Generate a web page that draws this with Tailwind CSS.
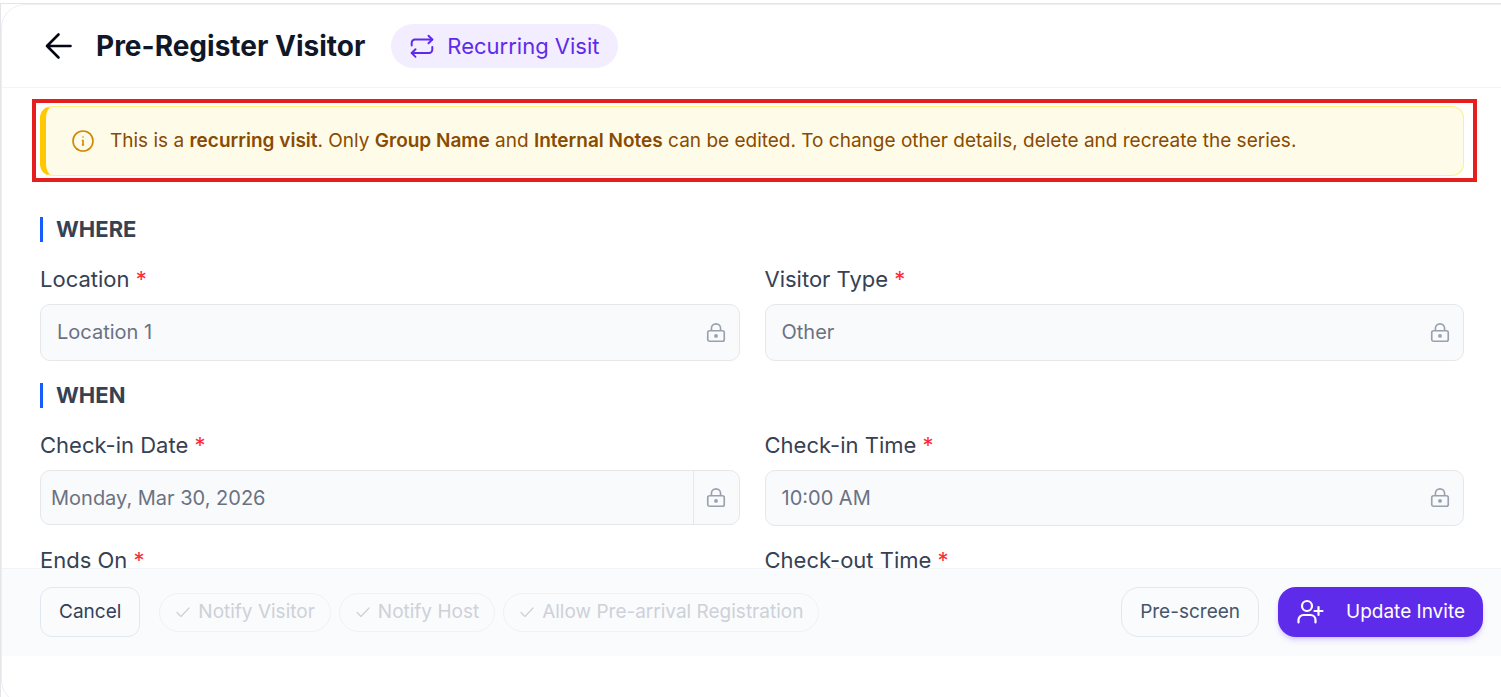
<!DOCTYPE html>
<html lang="en">
<head>
    <meta charset="UTF-8">
    <meta name="viewport" content="width=device-width, initial-scale=1.0">
    <title>Pre-Register Visitor</title>
    <script src="https://cdn.jsdelivr.net/npm/@tailwindcss/browser@4"></script>
</head>
<body class="h-screen overflow-hidden bg-white pt-[3px] font-['Inter',sans-serif] text-gray-700">
    <div class="h-full border-t border-l border-[#e4e4e9]">
        <div class="-mr-8 h-[calc(100%+7px)] rounded-3xl border border-gray-200/70 pr-[31px] flex flex-col">

            <!-- Header -->
            <header class="flex h-[83px] shrink-0 items-center border-b border-gray-100 pl-[38px]">
                <button type="button" aria-label="Back" class="mr-5 flex size-9 items-center justify-center text-gray-950">
                    <svg class="size-9" viewBox="0 0 36 36" fill="none" stroke="currentColor" stroke-width="2.6" stroke-linecap="round" stroke-linejoin="round"><path d="M18.500 6.500 7 18l11.500 11.500M7 18h23.500"/></svg>
                </button>
                <h1 class="text-[28px] leading-9 font-bold text-gray-900">Pre-Register Visitor</h1>
                <span class="ml-[26px] flex h-11 items-center gap-3 rounded-full bg-[#f2edff] px-[18px] text-[22px] leading-7 text-[#5f2bea]">
                    <svg class="size-[26px]" viewBox="0 0 24 24" fill="none" stroke="currentColor" stroke-width="1.8" stroke-linecap="round" stroke-linejoin="round"><path d="m18 2.500 3.500 3.500L18 9.500"/><path d="M2.500 11.500V9a3 3 0 0 1 3-3h16"/><path d="m6 22-3.500-3.500L6 15"/><path d="M21.500 13v2.500a3 3 0 0 1-3 3h-16"/></svg>
                    Recurring Visit
                </span>
            </header>

            <!-- Form -->
            <main class="min-h-0 flex-1 overflow-hidden pt-[18px] pr-[37px] pl-[38px]">
                <div class="relative">
                    <div class="flex h-[70px] items-center gap-[15px] rounded-xl border border-l-6 border-[#fff085] border-l-[#ffc800] bg-[#fefbe8] px-[25px]">
                        <svg class="size-6 shrink-0 text-[#d08700]" viewBox="0 0 24 24" fill="none" stroke="currentColor" stroke-width="1.6" stroke-linecap="round"><circle cx="12" cy="12" r="10"/><path d="M11.500 11.500h.5v4.500M11.500 16h1M12 8h.01"/></svg>
                        <p class="text-[19px] text-[#894b00]">This is a <strong class="font-semibold">recurring visit</strong>. Only <strong class="font-semibold">Group Name</strong> and <strong class="font-semibold">Internal Notes</strong> can be edited. To change other details, delete and recreate the series.</p>
                    </div>
                    <div class="pointer-events-none absolute -top-[7px] -right-[13px] -bottom-[6px] -left-[8px] border-4 border-[#e61e1e]"></div>
                </div>

                <h2 class="mt-[41px] border-l-3 border-[#155dfc] pl-[13px] text-[22px] leading-[25px] font-bold">WHERE</h2>
                <div class="mt-[23px] grid grid-cols-2 gap-x-[25px]">
                    <div>
                        <label for="location" class="block text-[22px] leading-7">Location <span class="text-[#fb2c36]">*</span></label>
                        <div class="mt-[11px] flex h-[57px] items-center rounded-[10px] border border-gray-200 bg-[#f9fafc] pr-3 pl-4">
                            <input id="location" type="text" value="Location 1" disabled class="min-w-0 flex-1 text-[20px] leading-[29px] text-[#6a7282]">
                            <svg class="size-[22px] text-[#99a1af]" viewBox="0 0 24 24" fill="none" stroke="currentColor" stroke-width="1.8" stroke-linejoin="round"><rect x="3" y="9.500" width="18" height="11.500" rx="2"/><path d="M7 9.500V7a5 5 0 0 1 10 0v2.500"/><circle cx="12" cy="15.200" r="1.200" fill="currentColor"/></svg>
                        </div>
                    </div>
                    <div>
                        <label for="visitor-type" class="block text-[22px] leading-7">Visitor Type <span class="text-[#fb2c36]">*</span></label>
                        <div class="mt-[11px] flex h-[57px] items-center rounded-[10px] border border-gray-200 bg-[#f9fafc] pr-3 pl-4">
                            <input id="visitor-type" type="text" value="Other" disabled class="min-w-0 flex-1 text-[20px] leading-[29px] text-[#6a7282]">
                            <svg class="size-[22px] text-[#99a1af]" viewBox="0 0 24 24" fill="none" stroke="currentColor" stroke-width="1.8" stroke-linejoin="round"><rect x="3" y="9.500" width="18" height="11.500" rx="2"/><path d="M7 9.500V7a5 5 0 0 1 10 0v2.500"/><circle cx="12" cy="15.200" r="1.200" fill="currentColor"/></svg>
                        </div>
                    </div>
                </div>

                <h2 class="mt-[22px] border-l-3 border-[#155dfc] pl-[13px] text-[22px] leading-[25px] font-bold">WHEN</h2>
                <div class="mt-[23px] grid grid-cols-2 gap-x-[25px] gap-y-5">
                    <div>
                        <label for="checkin-date" class="block text-[22px] leading-7">Check-in Date <span class="text-[#fb2c36]">*</span></label>
                        <div class="mt-[11px] flex h-[55px] items-center rounded-[10px] border border-gray-200 bg-[#f9fafc] pl-[10px]">
                            <input id="checkin-date" type="text" value="Monday, Mar 30, 2026" disabled class="min-w-0 flex-1 text-[20px] text-[#6a7282]">
                            <span class="flex h-full w-[46px] items-center justify-center border-l border-gray-200">
                                <svg class="size-[22px] text-[#99a1af]" viewBox="0 0 24 24" fill="none" stroke="currentColor" stroke-width="1.8" stroke-linejoin="round"><rect x="3" y="9.500" width="18" height="11.500" rx="2"/><path d="M7 9.500V7a5 5 0 0 1 10 0v2.500"/><circle cx="12" cy="15.200" r="1.200" fill="currentColor"/></svg>
                            </span>
                        </div>
                    </div>
                    <div>
                        <label for="checkin-time" class="block text-[22px] leading-7">Check-in Time <span class="text-[#fb2c36]">*</span></label>
                        <div class="mt-[11px] flex h-14 items-center rounded-[10px] border border-gray-200 bg-[#f9fafc] pr-3 pl-4">
                            <input id="checkin-time" type="text" value="10:00 AM" disabled class="min-w-0 flex-1 text-[20px] text-[#6a7282]">
                            <svg class="size-[22px] text-[#99a1af]" viewBox="0 0 24 24" fill="none" stroke="currentColor" stroke-width="1.8" stroke-linejoin="round"><rect x="3" y="9.500" width="18" height="11.500" rx="2"/><path d="M7 9.500V7a5 5 0 0 1 10 0v2.500"/><circle cx="12" cy="15.200" r="1.200" fill="currentColor"/></svg>
                        </div>
                    </div>
                    <p class="text-[22px] leading-7">Ends On <span class="text-[#fb2c36]">*</span></p>
                    <p class="text-[22px] leading-7">Check-out Time <span class="text-[#fb2c36]">*</span></p>
                </div>
            </main>

            <!-- Actions -->
            <footer class="mb-[47px] flex shrink-0 items-center border-t border-gray-100 bg-[#fafbfd] pt-[18px] pr-[18px] pb-[19px] pl-[38px] text-[19px] leading-7">
                <button type="button" class="h-[50px] rounded-xl border border-[#e2e8f0] px-[18px] text-[#314158]">Cancel</button>
                <div class="ml-[19px] flex gap-2 text-[#cdd1d8]">
                    <button type="button" disabled class="flex h-[39px] items-center gap-[7px] rounded-full border border-[#f0f1f4] px-[15px]">
                        <svg class="size-4" viewBox="0 0 16 16" fill="none" stroke="currentColor" stroke-width="1.2" stroke-linecap="round" stroke-linejoin="round"><path d="m2 8.500 4 4L14 4"/></svg>
                        Notify Visitor
                    </button>
                    <button type="button" disabled class="flex h-[39px] items-center gap-[7px] rounded-full border border-[#f0f1f4] px-[15px]">
                        <svg class="size-4" viewBox="0 0 16 16" fill="none" stroke="currentColor" stroke-width="1.2" stroke-linecap="round" stroke-linejoin="round"><path d="m2 8.500 4 4L14 4"/></svg>
                        Notify Host
                    </button>
                    <button type="button" disabled class="flex h-[39px] items-center gap-[7px] rounded-full border border-[#f0f1f4] px-[15px]">
                        <svg class="size-4" viewBox="0 0 16 16" fill="none" stroke="currentColor" stroke-width="1.2" stroke-linecap="round" stroke-linejoin="round"><path d="m2 8.500 4 4L14 4"/></svg>
                        Allow Pre-arrival Registration
                    </button>
                </div>
                <div class="ml-auto flex gap-[19px]">
                    <button type="button" class="h-[50px] rounded-[18px] border border-[#e2e8f0] px-[18px] text-[#45556c]">Pre-screen</button>
                    <button type="button" class="flex h-[50px] items-center gap-[22px] rounded-[18px] bg-[#5f2bea] px-[18px] text-white shadow-md shadow-[#5f2bea]/20">
                        <svg class="size-7" viewBox="0 0 28 28" fill="none" stroke="currentColor" stroke-width="2.2" stroke-linecap="round" stroke-linejoin="round"><circle cx="11" cy="8" r="5"/><path d="M2.500 24.500V22a5 5 0 0 1 5-5h7a5 5 0 0 1 5 5v2.500M22.500 9v8M18.500 13h8"/></svg>
                        Update Invite
                    </button>
                </div>
            </footer>
        </div>
    </div>
</body>
</html>
